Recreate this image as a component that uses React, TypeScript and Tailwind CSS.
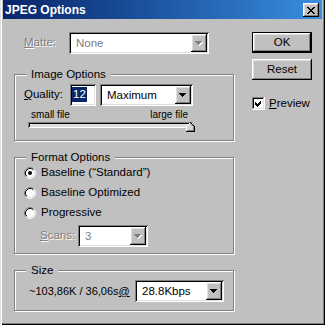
import React from "react";

const SUNKEN =
  "shadow-[inset_1px_1px_0_#808080,inset_-1px_-1px_0_#fff,inset_2px_2px_0_#000,inset_-2px_-2px_0_#dfdfdf]";
const RAISED =
  "shadow-[inset_-1px_-1px_0_#000,inset_1px_1px_0_#fff,inset_-2px_-2px_0_#808080,inset_2px_2px_0_#dfdfdf]";
const DISABLED = "text-[#808080] [text-shadow:1px_1px_0_#fff]";

function Arrow({ disabled }: { disabled?: boolean }): React.ReactElement {
  const d = "M0 0h7v1h-1v1h-1v1h-1v1h-1v-1h-1v-1h-1v-1h-1z";
  return (
    <svg width="8" height="5" viewBox="0 0 8 5" shapeRendering="crispEdges">
      {disabled && <path d={d} transform="translate(1 1)" fill="#fff" />}
      <path d={d} fill={disabled ? "#808080" : "#000"} />
    </svg>
  );
}

function Combo({
  value,
  className,
  disabled
}: {
  value: string;
  className: string;
  disabled?: boolean;
}): React.ReactElement {
  return (
    <div className={`flex h-[22px] bg-white p-[2px] ${SUNKEN} ${className}`}>
      <span
        className={`min-w-0 flex-1 pl-[5px] leading-[18px] ${disabled ? "text-[#808080]" : ""}`}
      >
        {value}
      </span>
      <span className={`flex w-[16px] items-center justify-center bg-[#c0c0c0] ${RAISED}`}>
        <Arrow disabled={disabled} />
      </span>
    </div>
  );
}

function Group({
  title,
  className,
  children
}: {
  title: string;
  className: string;
  children?: React.ReactNode;
}): React.ReactElement {
  return (
    <div
      className={`relative border border-[#808080] shadow-[1px_1px_0_#fff,inset_1px_1px_0_#fff] ${className}`}
    >
      <span className="absolute left-[11px] top-[-8px] bg-[#c0c0c0] px-[5px] leading-[14px]">
        {title}
      </span>
      {children}
    </div>
  );
}

function Radio({ checked, label }: { checked?: boolean; label: string }): React.ReactElement {
  return (
    <div className="flex h-[20px] items-center">
      <svg width="12" height="12" viewBox="0 0 12 12">
        <circle cx="6" cy="6" r="5" fill="#fff" />
        <path d="M2.11 9.89A5.5 5.5 0 0 1 9.89 2.11" fill="none" stroke="#808080" />
        <path d="M9.89 2.11A5.5 5.5 0 0 1 2.11 9.89" fill="none" stroke="#fff" />
        <path d="M2.82 9.18A4.5 4.5 0 0 1 9.18 2.82" fill="none" stroke="#000" />
        <path d="M9.18 2.82A4.5 4.5 0 0 1 2.82 9.18" fill="none" stroke="#dfdfdf" />
        {checked && <circle cx="6" cy="6" r="2" fill="#000" />}
      </svg>
      <span className="ml-[5px]">{label}</span>
    </div>
  );
}

export default function App(): React.ReactElement {
  return (
    <div className="flex h-[325px] w-[325px] flex-col bg-[#c0c0c0] px-[3px] pb-[3px] font-['Liberation_Sans',Arial,sans-serif] text-[11.5px] text-black shadow-[inset_1px_0_0_#dfdfdf,inset_2px_0_0_#fff,inset_-1px_-1px_0_#000,inset_-2px_-2px_0_#808080]">
      {/* title bar */}
      <div className="flex h-[19px] shrink-0 items-start justify-between bg-linear-to-r from-[#0a246a] to-[#3a8ee0] pl-[2px] pr-[3px]">
        <span className="text-[12px] font-bold leading-[20px] text-white">JPEG Options</span>
        <span
          className={`mt-[3px] flex h-[14px] w-[16px] items-center justify-center bg-[#c0c0c0] ${RAISED}`}
        >
          <svg width="8" height="7" viewBox="0 0 8 7" shapeRendering="crispEdges">
            <path
              d="M0 0h2v1h1v1h2v-1h1v-1h2v1h-1v1h-1v1h-1v1h1v1h1v1h1v1h-2v-1h-1v-1h-2v1h-1v1h-2v-1h1v-1h1v-1h1v-1h-1v-1h-1v-1h-1z"
              fill="#000"
            />
          </svg>
        </span>
      </div>

      <div className="flex pl-[11px] pt-[13px]">
        <div className="flex w-[220px] flex-col">
          <div className="flex h-[22px] items-center">
            <span className={`w-[55px] pl-[10px] ${DISABLED}`}>
              <span className="underline">M</span>atte:
            </span>
            <Combo value="None" className="w-[140px]" disabled />
          </div>

          <Group title="Image Options" className="mt-[20px] h-[67px] pl-[9px] pt-[9px]">
            <div className="flex h-[22px] items-center">
              <span className="w-[46px]">
                <span className="underline">Q</span>uality:
              </span>
              <div className={`h-[22px] w-[26px] bg-white p-[2px] ${SUNKEN}`}>
                <span className="inline-block bg-[#0a246a] px-[1px] leading-[15px] text-white">
                  12
                </span>
              </div>
              <Combo value="Maximum" className="ml-[4px] w-[93px]" />
            </div>
            <div className="ml-[4px] mt-[3px] flex w-[166px] justify-between pl-[3px] pr-[6px] text-[10px] leading-[12px]">
              <span>small file</span>
              <span>large file</span>
            </div>
            <div className="relative ml-[4px] mt-[1px] h-[6px] w-[165px] bg-[#dcdcdc] shadow-[inset_1px_1px_0_#808080,inset_-1px_-1px_0_#fff,inset_2px_2px_0_#000]">
              <svg
                className="absolute left-[158px] top-0"
                width="9"
                height="10"
                viewBox="0 0 9 10"
                shapeRendering="crispEdges"
              >
                <path d="M0.5 9V4.5L4.5 0.5L8.5 4.5V9Z" fill="#d4d4d4" />
                <path d="M0.5 9V4.5L4.5 0.5" fill="none" stroke="#fff" />
                <path d="M4.5 0.5L8.5 4.5V9.5H0" fill="none" stroke="#000" />
                <path d="M4.5 1.5L7.5 4.5V8.5H1" fill="none" stroke="#808080" />
              </svg>
            </div>
          </Group>

          <Group title="Format Options" className="mt-[16px] h-[97px] pl-[9px] pt-[5px]">
            <Radio checked label={"Baseline (\u201cStandard\u201d)"} />
            <Radio label="Baseline Optimized" />
            <Radio label="Progressive" />
            <div className="mt-[2px] flex h-[22px] items-center pl-[16px]">
              <span className={`w-[38px] ${DISABLED}`}>
                <span className="underline">S</span>cans:
              </span>
              <Combo value="3" className="w-[70px]" disabled />
            </div>
          </Group>

          <Group title="Size" className="mt-[16px] h-[41px] pl-[9px] pt-[9px]">
            <div className="flex h-[22px] items-center">
              <span className="ml-[5px] w-[106px] text-[11px]">
                ~103,86K / 36,06s<span className="underline">@</span>
              </span>
              <Combo value="28.8Kbps" className="w-[89px]" />
            </div>
          </Group>
        </div>

        <div className="ml-[18px] flex w-[60px] flex-col">
          <div className="h-[21px] w-[60px] border border-black">
            <button className={`h-full w-full bg-[#c0c0c0] leading-[17px] ${RAISED}`}>OK</button>
          </div>
          <button className={`mt-[6px] h-[21px] w-[60px] bg-[#c0c0c0] ${RAISED}`}>Reset</button>
          <div className="mt-[17px] flex h-[13px] items-center">
            <svg width="13" height="13" viewBox="0 0 13 13" shapeRendering="crispEdges">
              <rect width="13" height="13" fill="#fff" />
              <path d="M0 12.5V0.5H12.5" fill="none" stroke="#808080" />
              <path d="M1 11.5V1.5H11.5" fill="none" stroke="#000" />
              <path d="M0 12.5H12.5V0" fill="none" stroke="#fff" />
              <path d="M1 11.5H11.5V1" fill="none" stroke="#dfdfdf" />
              <path d="M3 5L5 7L9 3V6L5 10L3 8Z" fill="#000" />
            </svg>
            <span className="ml-[4px]">
              <span className="underline">P</span>review
            </span>
          </div>
        </div>
      </div>
    </div>
  );
}
